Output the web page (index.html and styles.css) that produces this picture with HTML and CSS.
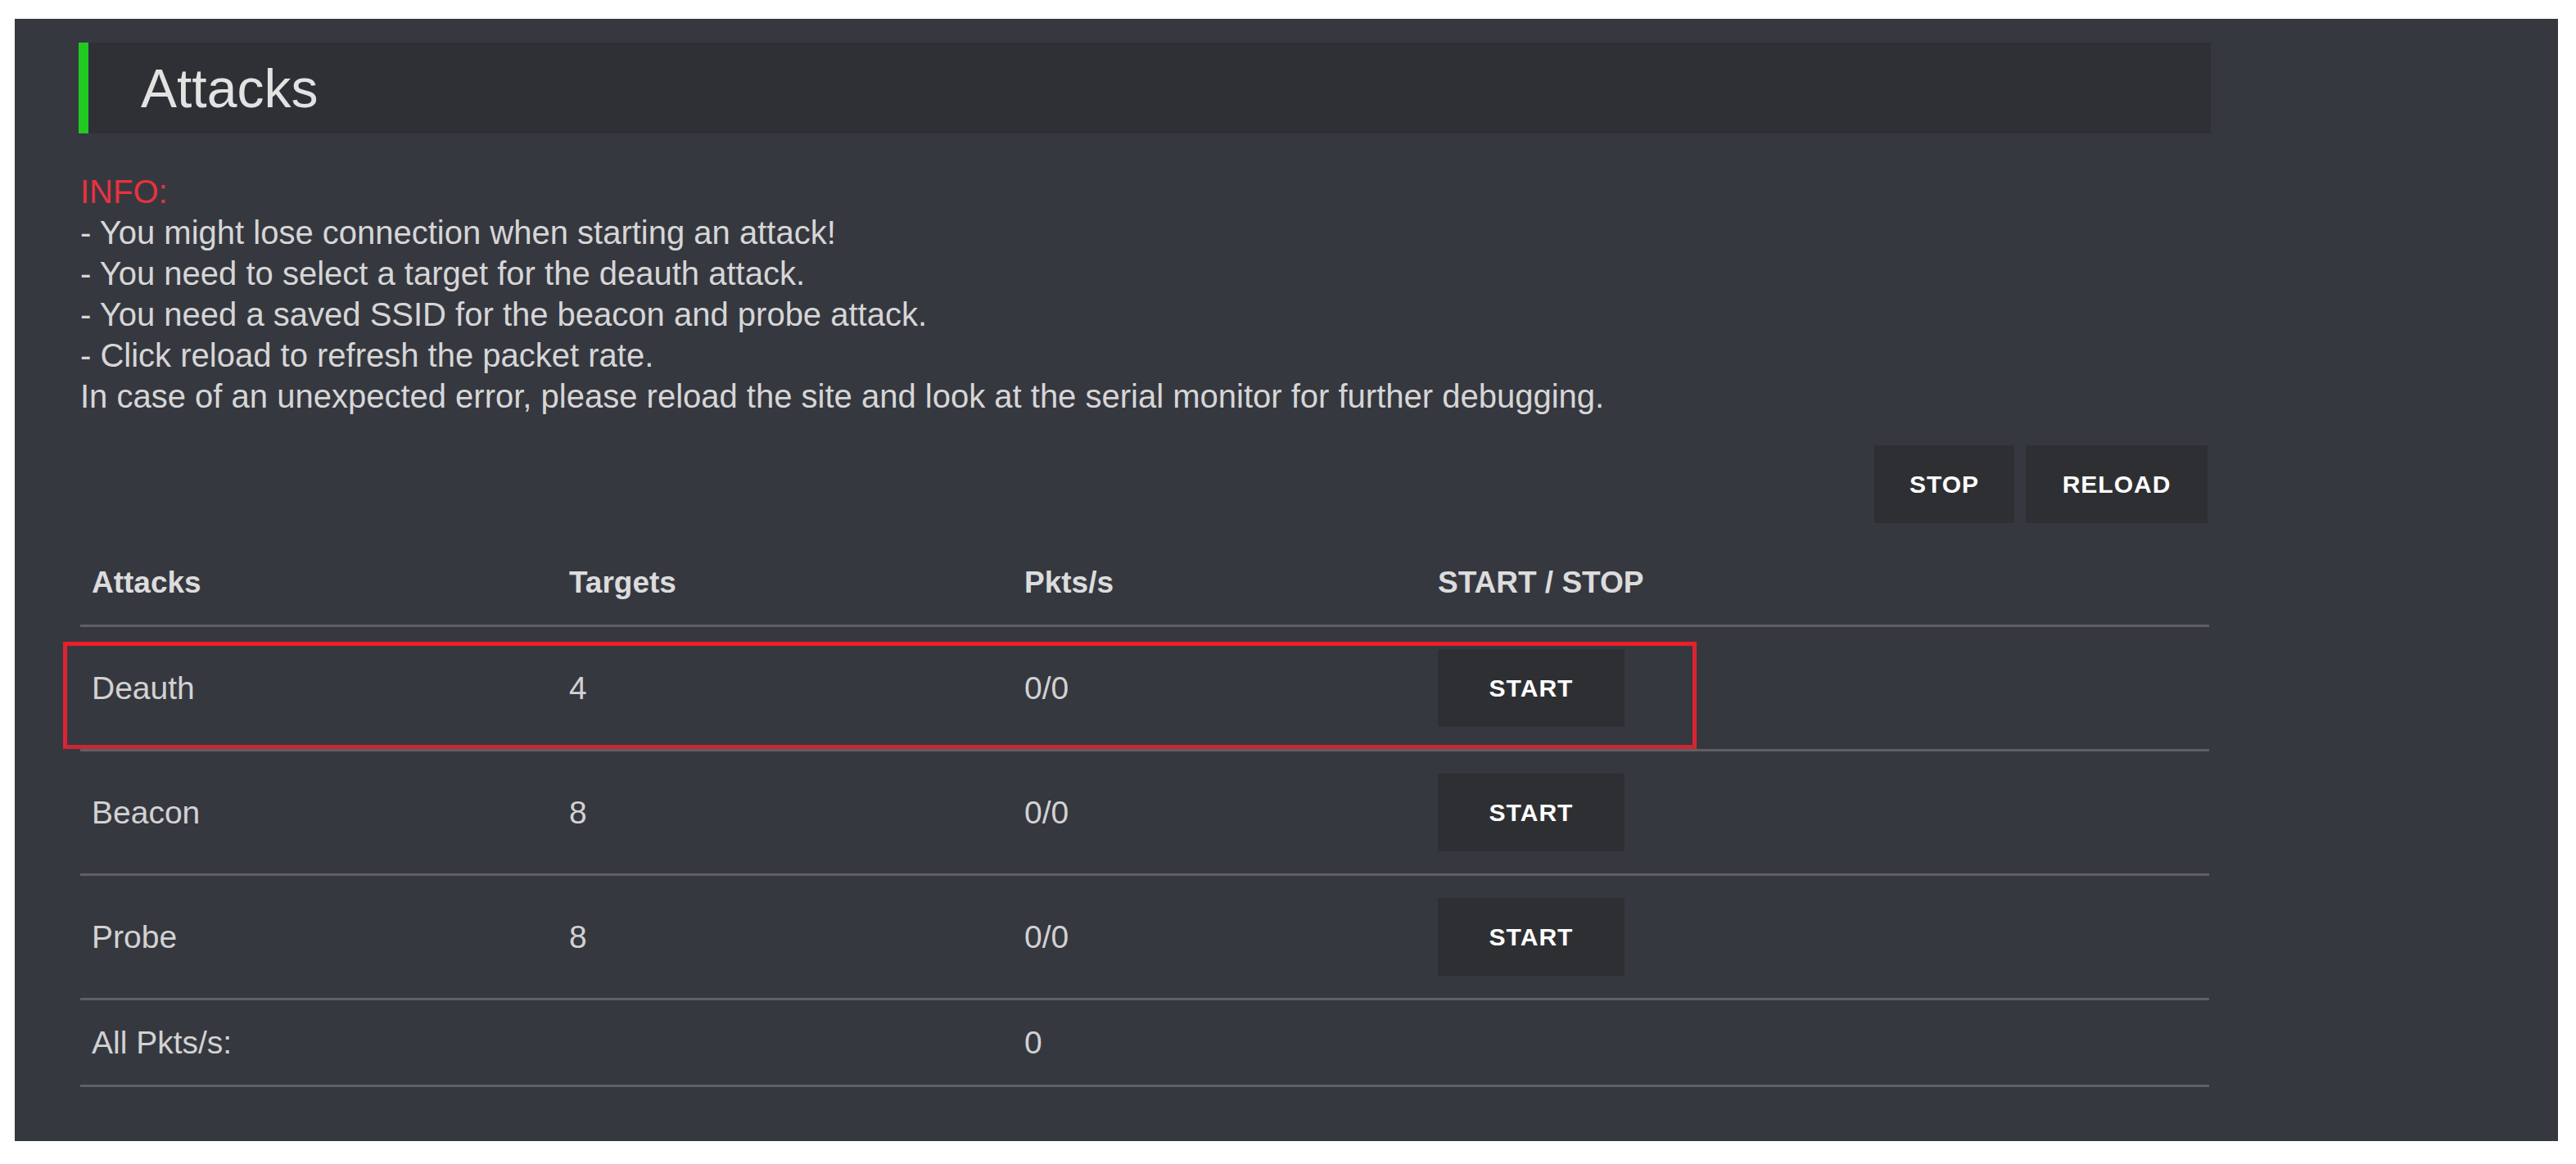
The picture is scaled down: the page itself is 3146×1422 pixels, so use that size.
FILE: index.html
```html
<!DOCTYPE html>
<html lang="en">
<head>
<meta charset="utf-8">
<title>Attacks</title>
<link rel="stylesheet" href="styles.css">
</head>
<body>
<div class="panel">
  <div class="content">
    <h1 class="title">Attacks</h1>
    <p class="info"><span class="info-label">INFO:</span><br>- You might lose connection when starting an attack!<br>- You need to select a target for the deauth attack.<br>- You need a saved SSID for the beacon and probe attack.<br>- Click reload to refresh the packet rate.<br>In case of an unexpected error, please reload the site and look at the serial monitor for further debugging.</p>
    <div class="actions">
      <button class="btn btn-stop">STOP</button>
      <button class="btn btn-reload">RELOAD</button>
    </div>
    <div class="table-wrap">
      <table class="attacks">
        <colgroup>
          <col class="c1"><col class="c2"><col class="c3"><col class="c4">
        </colgroup>
        <thead>
          <tr class="head-row"><th>Attacks</th><th>Targets</th><th>Pkts/s</th><th>START / STOP</th></tr>
        </thead>
        <tbody>
          <tr class="data-row"><td>Deauth</td><td>4</td><td>0/0</td><td><button class="btn btn-start">START</button></td></tr>
          <tr class="data-row"><td>Beacon</td><td>8</td><td>0/0</td><td><button class="btn btn-start">START</button></td></tr>
          <tr class="data-row"><td>Probe</td><td>8</td><td>0/0</td><td><button class="btn btn-start">START</button></td></tr>
          <tr class="total-row"><td>All Pkts/s:</td><td></td><td>0</td><td></td></tr>
        </tbody>
      </table>
      <div class="highlight"></div>
    </div>
  </div>
</div>
</body>
</html>
```

FILE: styles.css
```css
html, body {
  margin: 0;
  padding: 0;
  background: #ffffff;
}

.panel {
  margin: 23px 0 0 18px;
  width: 3106px;
  height: 1371px;
  box-sizing: border-box;
  padding: 29px 0 0 78px;
  background: #363840;
  font-family: "Liberation Sans", Arial, sans-serif;
}

.content {
  width: 2604px;
}

.title {
  margin: 0;
  height: 111px;
  box-sizing: border-box;
  display: flex;
  align-items: center;
  padding-left: 64px;
  background: #2f3035;
  border-left: 12px solid #22c922;
  font-size: 66px;
  font-weight: 400;
  color: #e2e2e2;
}

.info {
  margin: 46px 0 0 2px;
  font-size: 40px;
  line-height: 50px;
  color: #d6d6d6;
}

.info-label {
  color: #e8323e;
}

.actions {
  margin-top: 35px;
  display: flex;
  justify-content: flex-end;
  gap: 14px;
  padding-right: 4px;
}

.btn {
  height: 95px;
  border: none;
  border-radius: 2px;
  background: #2e2f33;
  color: #ffffff;
  font-family: "Liberation Sans", Arial, sans-serif;
  font-weight: 700;
  font-size: 30px;
  letter-spacing: 1px;
  text-transform: uppercase;
  cursor: pointer;
}

.btn-stop { width: 171px; }
.btn-reload { width: 222px; }
.btn-start { width: 228px; }

.table-wrap {
  position: relative;
  margin-top: 21px;
}

.attacks {
  width: 2600px;
  margin-left: 2px;
  border-collapse: collapse;
  table-layout: fixed;
}

.c1 { width: 583px; }
.c2 { width: 556px; }
.c3 { width: 505px; }
.c4 { width: 956px; }

.attacks th,
.attacks td {
  padding: 0 0 0 14px;
  text-align: left;
  vertical-align: middle;
  border-bottom: 3px solid #5e6064;
}

.attacks th {
  height: 103px;
  font-size: 37px;
  font-weight: 700;
  color: #dcdcdc;
}

.attacks td {
  font-size: 39px;
  color: #d2d2d2;
}

.data-row td {
  height: 149px;
}

.total-row td {
  height: 103px;
}

.highlight {
  position: absolute;
  left: -19px;
  top: 124px;
  width: 1995px;
  height: 131px;
  box-sizing: border-box;
  border: 5px solid #dc2430;
  border-top-color: #ec1e28;
  border-bottom-color: #c92636;
  pointer-events: none;
}
```
